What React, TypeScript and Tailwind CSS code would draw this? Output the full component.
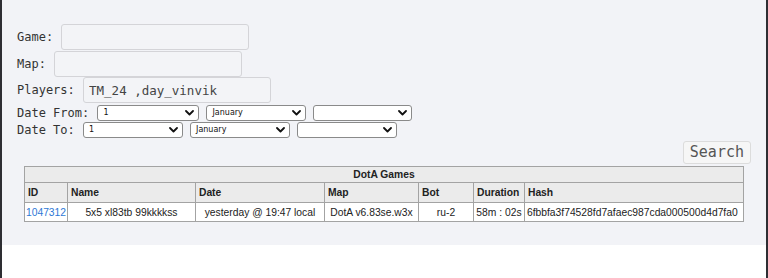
import React from "react";

const mono = "font-['DejaVu_Sans_Mono','Liberation_Mono',monospace]";

function TextRow({ label, width, value }: { label: string; width: number; value?: string }) {
  return (
    <div className={`flex items-center text-[12px] text-[#333] ${mono}`}>
      <span className="whitespace-pre">{label} </span>
      <input
        readOnly
        value={value ?? ""}
        style={{ width }}
        className={`ml-[1px] h-[26px] rounded-[3px] border border-[#d4d4d8] bg-[#f3f4f7] px-[5px] text-[12.5px] text-[#444] outline-none ${mono}`}
      />
    </div>
  );
}

function Select({ width, value }: { width: number; value: string }) {
  return (
    <div className="relative" style={{ width }}>
      <div className="flex h-[16px] items-center rounded-[3px] border border-[#8a8a8a] bg-white pl-[5px] font-['DejaVu_Sans','Noto_Sans',sans-serif] text-[8px] text-[#111]">
        {value}
      </div>
      <svg
        className="absolute right-[5px] top-[5px]"
        width="9"
        height="6"
        viewBox="0 0 9 6"
        fill="none"
      >
        <path d="M1 1l3.5 3.5L8 1" stroke="#111" strokeWidth="1.8" strokeLinecap="round" strokeLinejoin="round" />
      </svg>
    </div>
  );
}

function DateRow({ label, sizes }: { label: string; sizes: number[] }) {
  return (
    <div className={`flex h-[16px] items-center text-[12px] leading-[16px] text-[#333] ${mono}`}>
      <span className="whitespace-pre">{label} </span>
      <div className="ml-[1px] flex gap-[7px]">
        <Select width={sizes[0]} value="1" />
        <Select width={sizes[1]} value="January" />
        <Select width={sizes[2]} value="" />
      </div>
    </div>
  );
}

const cols = [
  { name: "ID", w: 43 },
  { name: "Name", w: 128 },
  { name: "Date", w: 129 },
  { name: "Map", w: 94 },
  { name: "Bot", w: 55 },
  { name: "Duration", w: 51 },
  { name: "Hash", w: 219 },
];

export default function App() {
  return (
    <div className="h-[278px] w-[768px] overflow-hidden border-x-2 border-[#2e2e33] bg-white">
      <div className="bg-[#f2f3f7] px-[15px] pb-[23px] pt-[24px]">
        <TextRow label="Game:" width={188} />
        <div className="mt-[1px]">
          <TextRow label="Map:" width={188} />
        </div>
        <TextRow label="Players:" width={188} value="TM_24 ,day_vinvik" />
        <div className="mt-[2px]">
          <DateRow label="Date From:" sizes={[102, 100, 99]} />
        </div>
        <div className="mt-[1px]">
          <DateRow label="Date To:" sizes={[100, 100, 100]} />
        </div>

        <div className="mt-[3px] flex justify-end">
          <button
            type="button"
            className={`h-[23px] rounded-[3px] border border-[#dcdcdc] bg-[#f6f6f6] px-[6px] text-[15px] leading-none text-[#555] ${mono}`}
          >
            Search
          </button>
        </div>

        <table className="mx-auto mt-[2px] w-[719px] table-fixed border-collapse border border-[#a3a3a3] font-['Liberation_Sans',Arial,sans-serif] text-[10.3px] text-[#222]">
          <colgroup>
            {cols.map((c) => (
              <col key={c.name} style={{ width: c.w }} />
            ))}
          </colgroup>
          <thead>
            <tr className="h-[16px] bg-[#ebebeb]">
              <th colSpan={7} className="border border-[#a3a3a3] text-center font-bold">
                DotA Games
              </th>
            </tr>
            <tr className="h-[20px] bg-[#ebebeb]">
              {cols.map((c) => (
                <th key={c.name} className="border border-[#a3a3a3] pl-[3px] text-left font-bold">
                  {c.name}
                </th>
              ))}
            </tr>
          </thead>
          <tbody>
            <tr className="h-[19px] bg-white">
              <td className="border border-[#a3a3a3] pl-[1px] text-[#2e78d6]">1047312</td>
              <td className="border border-[#a3a3a3] text-center">5x5 xl83tb 99kkkkss</td>
              <td className="border border-[#a3a3a3] text-center">yesterday @ 19:47 local</td>
              <td className="border border-[#a3a3a3] text-center">DotA v6.83se.w3x</td>
              <td className="border border-[#a3a3a3] text-center">ru-2</td>
              <td className="border border-[#a3a3a3] text-center whitespace-nowrap">58m : 02s</td>
              <td className="border border-[#a3a3a3] pl-[2px] whitespace-nowrap">6fbbfa3f74528fd7afaec987cda000500d4d7fa0</td>
            </tr>
          </tbody>
        </table>
      </div>
    </div>
  );
}
